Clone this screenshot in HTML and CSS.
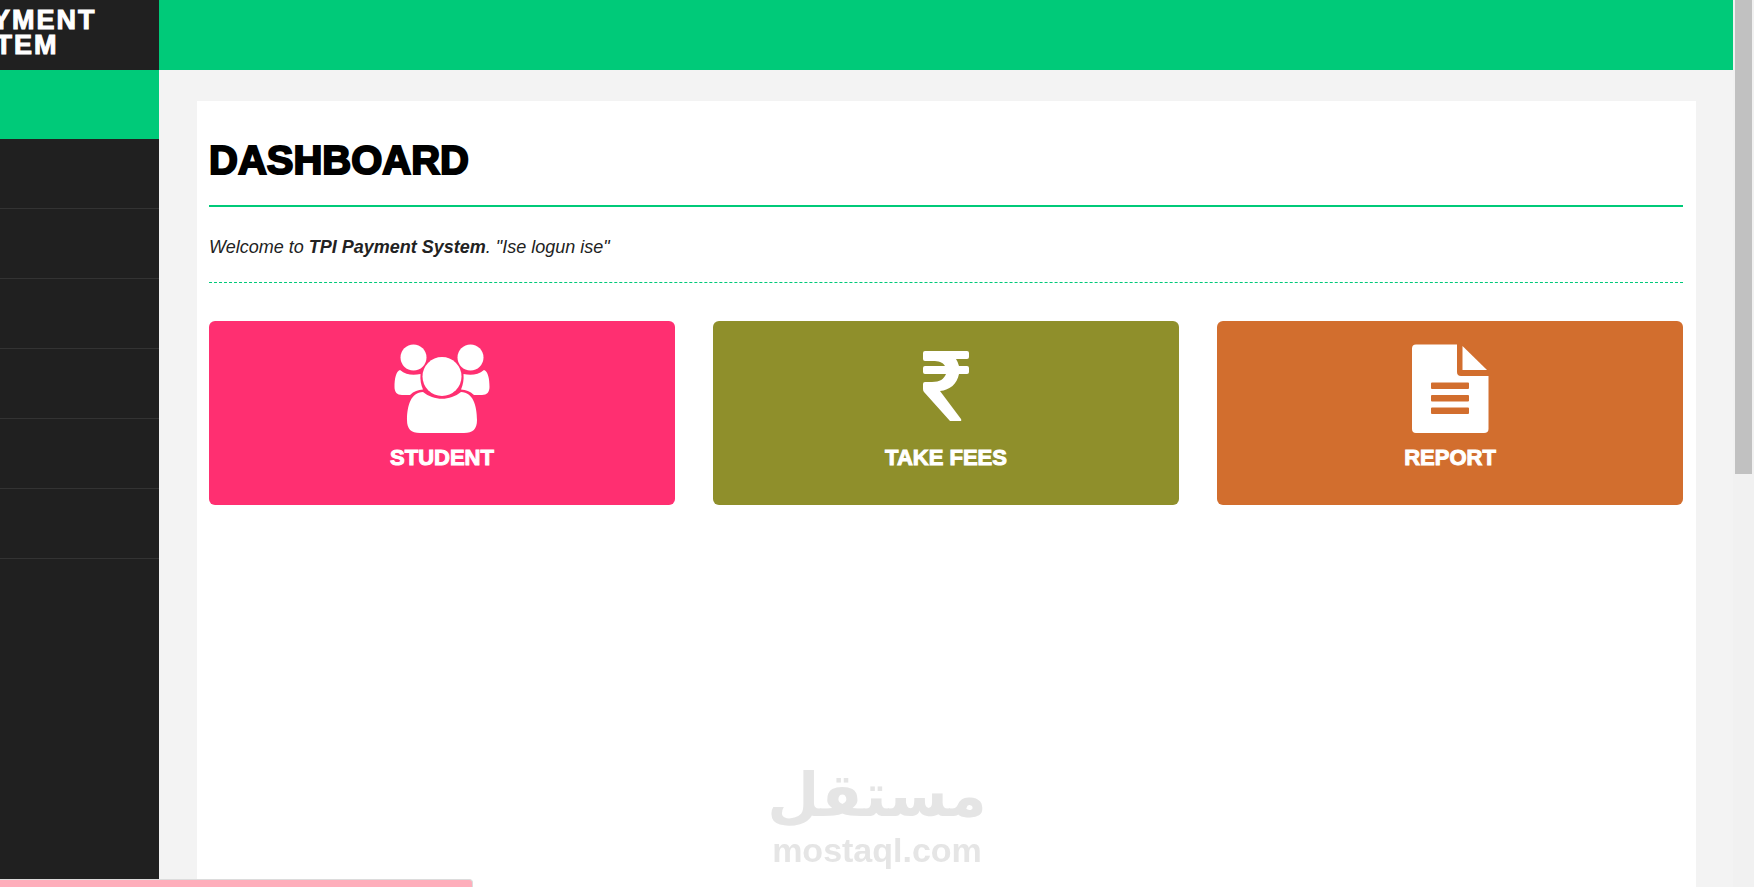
FILE: index.html
```
<!DOCTYPE html>
<html lang="en">
<head>
    <meta charset="UTF-8">
    <meta name="viewport" content="width=device-width, initial-scale=1.0">
    <title>TPI Payment System</title>
    <link rel="stylesheet" href="styles.css">
</head>
<body>
    <div class="wrapper">
        <aside class="sidebar">
            <div class="sidebar-inner">
                <div class="brand">TPI PAYMENT<br>SYSTEM</div>
                <nav class="menu">
                    <a class="active" href="#"></a>
                    <a href="#"></a>
                    <a href="#"></a>
                    <a href="#"></a>
                    <a href="#"></a>
                    <a href="#"></a>
                    <a href="#"></a>
                </nav>
            </div>
        </aside>

        <div class="page">
            <header class="topbar"></header>
            <main class="content">
                <h1>DASHBOARD</h1>
                <p class="welcome">Welcome to <strong>TPI Payment System</strong>. "Ise logun ise"</p>

                <div class="cards">
                    <a class="card student" href="#">
                        <svg viewBox="0 0 96 90" width="96" height="90">
                            <circle cx="19.5" cy="13.5" r="13"/>
                            <circle cx="76.5" cy="13.5" r="13"/>
                            <path d="M6 26C2 27 .5 35 .5 43C.5 48 3 51 8 51H16C20 47 24 46 29 45.500C27 41 26 36 26.500 30C19 31.500 12 31 6 26Z"/>
                            <path d="M90 26C94 27 95.500 35 95.500 43C95.500 48 93 51 88 51H80C76 47 72 46 67 45.500C69 41 70 36 69.500 30C77 31.500 84 31 90 26Z"/>
                            <circle cx="48" cy="32.5" r="19.5"/>
                            <path d="M29 48C17 48 13 62 13 76C13 85 17 89 26 89H70C79 89 83 85 83 76C83 62 79 48 67 48C56 57 40 57 29 48Z"/>
                        </svg>
                        <span>STUDENT</span>
                    </a>
                    <a class="card fees" href="#">
                        <svg viewBox="0 0 46 90" width="46" height="90">
                            <path d="M2 7H44Q46 7 46 9V13Q46 15 44 15H33Q35 18 36 22H44Q46 22 46 24V28Q46 30 44 30H36C34 40 27 46 17 47L38 75Q39 77 37 77H27L1 48Q0 47 0 45V40Q0 38 2 38H9C17 38 21 35 23 30H2Q0 30 0 28V24Q0 22 2 22H22C20 18 15 17 10 17H2Q0 17 0 15V9Q0 7 2 7Z"/>
                        </svg>
                        <span>TAKE FEES</span>
                    </a>
                    <a class="card report" href="#">
                        <svg viewBox="0 0 77 90" width="77" height="90">
                            <path fill-rule="evenodd" d="M4 .5H45V28Q45 32 49 32H76.500V85Q76.500 89 72 89H4Q0 89 0 85V4.500Q0 .5 4 .5ZM20 38.500Q19 38.500 19 39.500V44Q19 45 20 45H56Q57 45 57 44V39.500Q57 38.500 56 38.500ZM20 51Q19 51 19 52V56.500Q19 57.500 20 57.500H56Q57 57.500 57 56.500V52Q57 51 56 51ZM20 63.500Q19 63.500 19 64.500V69Q19 70 20 70H56Q57 70 57 69V64.500Q57 63.500 56 63.500Z"/>
                            <path d="M50.500 2L75 26H50.500Z"/>
                        </svg>
                        <span>REPORT</span>
                    </a>
                </div>
            </main>
        </div>

        <div class="scrollbar"><div class="thumb"></div></div>
    </div>

    <div class="watermark">
        <div class="watermark-ar" lang="ar" dir="rtl">مستقل</div>
        <div class="watermark-en">mostaql.com</div>
    </div>
    <div class="status"></div>
</body>
</html>
```
FILE: styles.css
```
* {
    margin: 0;
    padding: 0;
    box-sizing: border-box;
}

body {
    font-family: 'Liberation Sans', Arial, sans-serif;
    background-color: #f3f3f3;
    overflow: hidden;
}

a {
    text-decoration: none;
    color: inherit;
}

.wrapper {
    display: flex;
    min-height: 100vh;
}

/* sidebar, partly slid off the left edge */
.sidebar {
    flex: 0 0 159px;
    display: flex;
    justify-content: flex-end;
    overflow: hidden;
    background-color: #202020;
}

.sidebar-inner {
    flex: 0 0 324px;
}

.brand {
    height: 70px;
    padding-top: 8px;
    color: #fff;
    font-size: 27px;
    line-height: 25px;
    font-weight: 900;
    letter-spacing: 2px;
    text-align: center;
    -webkit-text-stroke: 1px #fff;
}

.menu a {
    display: block;
    height: 70px;
    border-bottom: 1px solid #333;
}

.menu a.active {
    height: 69px;
    background-color: #00ca79;
    border-bottom: none;
}

.page {
    flex: 1;
    display: flex;
    flex-direction: column;
}

.topbar {
    height: 70px;
    background-color: #00ca79;
}

.content {
    flex: 1;
    margin: 31px 37px 0 38px;
    padding: 35px 13px 32px 12px;
    background-color: #fff;
}

h1 {
    padding-bottom: 21px;
    border-bottom: 2px solid #00ca79;
    color: #000;
    font-size: 40px;
    line-height: 48px;
    font-weight: 900;
    -webkit-text-stroke: 2px #000;
}

.welcome {
    padding: 28px 0 23px;
    border-bottom: 1px dashed #00ca79;
    color: #222;
    font-size: 18px;
    line-height: 24px;
    font-style: italic;
}

.cards {
    display: grid;
    grid-template-columns: repeat(3, 1fr);
    gap: 38px;
    margin-top: 38px;
}

.card {
    display: flex;
    flex-direction: column;
    align-items: center;
    gap: 10px;
    padding: 23px 12px 33px;
    border-radius: 6px;
    color: #fff;
    font-size: 22px;
    line-height: 28px;
    font-weight: 900;
    -webkit-text-stroke: 1px #fff;
}

.card svg {
    fill: #fff;
    -webkit-text-stroke: 0;
}

.student {
    background-color: #ff2f71;
}

.fees {
    background-color: #8f8f2b;
}

.report {
    background-color: #d26e2e;
}

.scrollbar {
    flex: 0 0 21px;
    padding: 0 2px;
    background-color: #f1f1f1;
}

.thumb {
    height: 474px;
    background-color: #c1c1c1;
}

.watermark {
    position: fixed;
    left: 0;
    right: 0;
    bottom: 17px;
    color: #e5e5e5;
    font-weight: bold;
    text-align: center;
}

.watermark-ar {
    font-family: 'DejaVu Sans', sans-serif;
    font-size: 60px;
    line-height: 70px;
}

.watermark-en {
    font-size: 34px;
    line-height: 40px;
}

.status {
    position: fixed;
    left: 0;
    bottom: 0;
    width: 473px;
    height: 8px;
    background-color: #feaebb;
    border-top: 1px solid #dcdcdc;
    border-right: 1px solid #dcdcdc;
    border-top-right-radius: 4px;
}
```
